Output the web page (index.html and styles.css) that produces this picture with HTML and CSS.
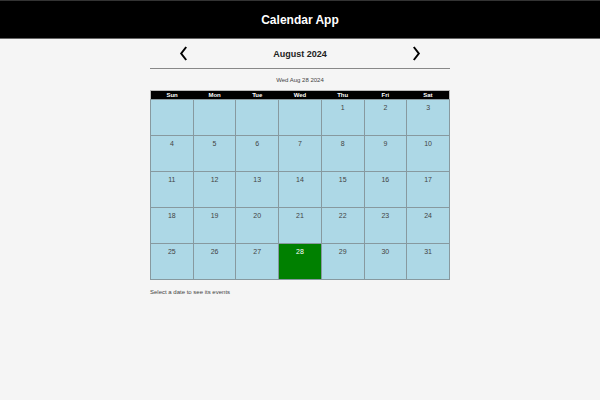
FILE: index.html
```
<!DOCTYPE html>
<html lang="en">
<head>
<meta charset="utf-8">
<title>Calendar App</title>
<link rel="stylesheet" href="styles.css">
</head>
<body>
<header class="app-header"><h1>Calendar App</h1></header>
<main class="calendar">
  <div class="month-nav">
    <button type="button" class="arrow" aria-label="Previous month"><svg width="8" height="16" viewBox="0 0 8 16"><path d="M7.2 1 2.2 7.5l5 6.5"/></svg></button>
    <h2>August 2024</h2>
    <button type="button" class="arrow" aria-label="Next month"><svg width="8" height="16" viewBox="0 0 8 16"><path d="M.8 1 5.8 7.5l-5 6.5"/></svg></button>
  </div>
  <p class="today">Wed Aug 28 2024</p>
  <table class="month">
    <thead>
      <tr><th>Sun</th><th>Mon</th><th>Tue</th><th>Wed</th><th>Thu</th><th>Fri</th><th>Sat</th></tr>
    </thead>
    <tbody>
      <tr><td></td><td></td><td></td><td></td><td><button type="button">1</button></td><td><button type="button">2</button></td><td><button type="button">3</button></td></tr>
      <tr><td><button type="button">4</button></td><td><button type="button">5</button></td><td><button type="button">6</button></td><td><button type="button">7</button></td><td><button type="button">8</button></td><td><button type="button">9</button></td><td><button type="button">10</button></td></tr>
      <tr><td><button type="button">11</button></td><td><button type="button">12</button></td><td><button type="button">13</button></td><td><button type="button">14</button></td><td><button type="button">15</button></td><td><button type="button">16</button></td><td><button type="button">17</button></td></tr>
      <tr><td><button type="button">18</button></td><td><button type="button">19</button></td><td><button type="button">20</button></td><td><button type="button">21</button></td><td><button type="button">22</button></td><td><button type="button">23</button></td><td><button type="button">24</button></td></tr>
      <tr><td><button type="button">25</button></td><td><button type="button">26</button></td><td><button type="button">27</button></td><td class="current"><button type="button">28</button></td><td><button type="button">29</button></td><td><button type="button">30</button></td><td><button type="button">31</button></td></tr>
    </tbody>
  </table>
  <p class="hint">Select a date to see its events</p>
</main>
</body>
</html>
```
FILE: styles.css
```
* {
  box-sizing: border-box;
}

body {
  margin: 0;
  background: #f5f5f5;
  color: #444;
  font: 6px/10px "Liberation Sans Narrow", "Liberation Sans", Arial, sans-serif;
}

h1, h2, p {
  margin: 0;
}

.app-header {
  padding: 9px;
  border-top: 1px solid #333;
  border-bottom: 1px solid #666;
  background: #000;
  color: #fff;
  text-align: center;
}

.app-header h1 {
  font-size: 12px;
  line-height: 20px;
  height: 19px;
}

.calendar {
  width: 50%;
  margin: 0 auto;
}

.month-nav {
  display: flex;
  align-items: center;
  justify-content: space-between;
  height: 30px;
  padding: 0 29px;
  border-bottom: 1px solid #888;
}

.month-nav h2 {
  color: #222;
  font-size: 9px;
  line-height: 12px;
}

.arrow {
  display: flex;
  padding: 0;
  border: 0;
  background: none;
}

.arrow path {
  fill: none;
  stroke: #000;
  stroke-width: 2;
}

.today {
  padding: 6px 0 5px;
  text-align: center;
}

.month {
  width: 100%;
  border: 1px solid #bbb;
  border-collapse: collapse;
  table-layout: fixed;
  font-size: 7px;
}

.month th {
  height: 9px;
  padding: 0;
  background: #000;
  color: #fff;
  font-size: 6px;
  line-height: 8px;
}

.month td {
  height: 36px;
  padding: 0;
  border: 1px solid #87999f;
  background: #add8e6;
  vertical-align: top;
}

.month button {
  display: block;
  width: 100%;
  height: 35px;
  padding: 3px 0 22px;
  border: 0;
  background: none;
  color: inherit;
  font: inherit;
}

.month .current {
  background: #008000;
  color: #fff;
}

.hint {
  padding: 7px 0;
}
```
